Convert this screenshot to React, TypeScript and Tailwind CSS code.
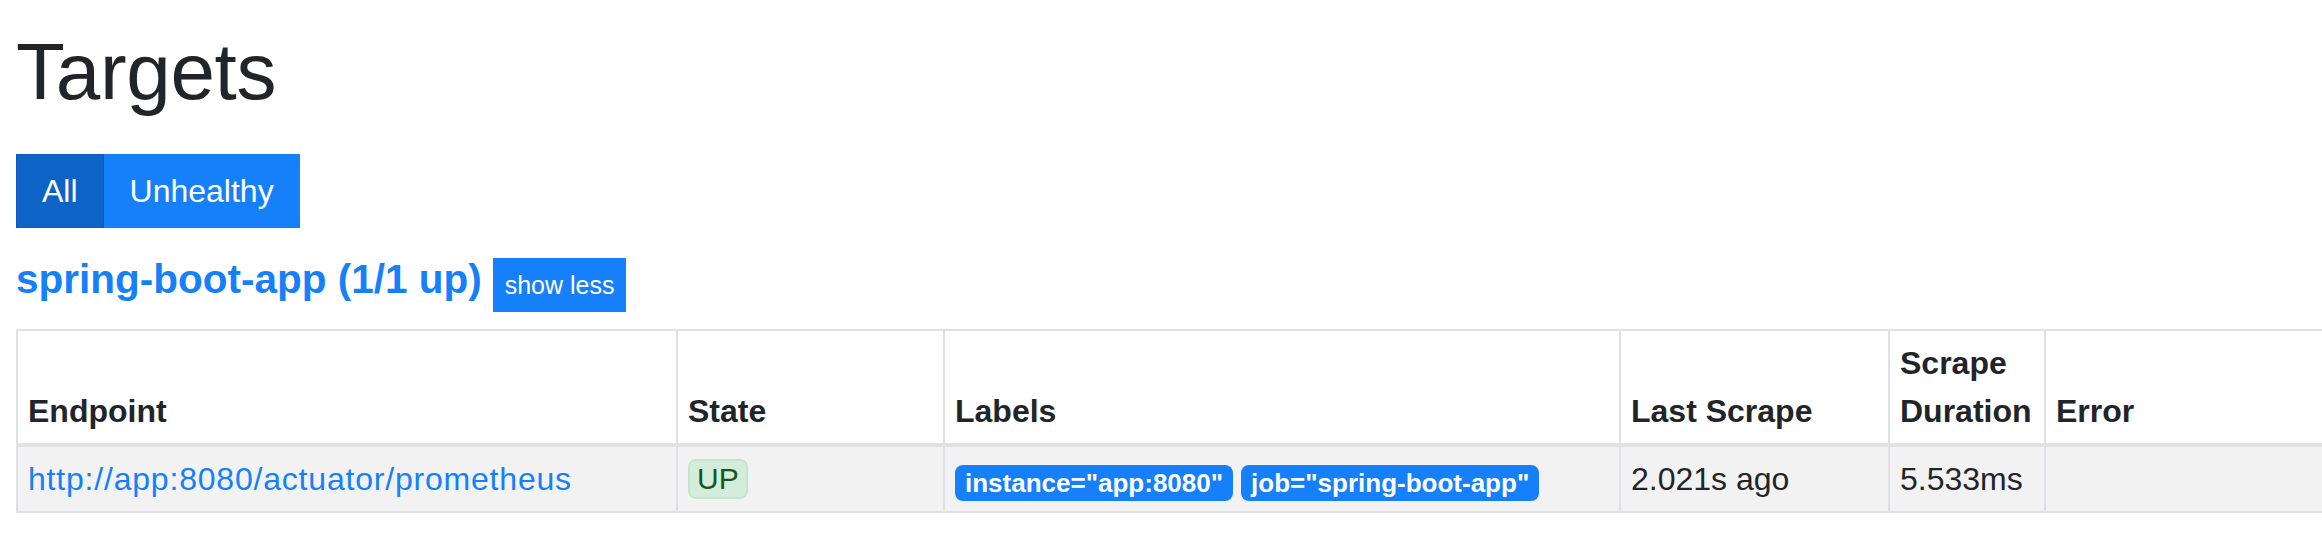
import React from 'react';

const blue = 'bg-[#1580f9]';

const labels = [
  { name: 'instance', value: 'app:8080' },
  { name: 'job', value: 'spring-boot-app' },
];

const App: React.FC = () => {
  return (
    <div className="min-h-screen overflow-hidden bg-white font-['Liberation_Sans',Arial,sans-serif] text-[#212529]">
      <div className="pl-4">
        <h1 className="pt-[24px] text-[80px] font-normal leading-[96px] tracking-[-0.3px]">Targets</h1>

        <div className="mt-[34px] flex">
          <button className="border border-[#0c5bbd] bg-[#0e63c7] px-[25px] py-[12px] text-[32px] leading-[48px] text-white">
            All
          </button>
          <button className={`border border-[#1580f9] ${blue} px-[25px] py-[12px] text-[32px] leading-[48px] text-white`}>
            Unhealthy
          </button>
        </div>

        <div className="mt-[27px] flex items-start gap-[11px]">
          <h2 className="text-[40.5px] font-bold leading-[48px] text-[#1580f9]">spring-boot-app (1/1 up)</h2>
          <button className={`mt-[3px] h-[54px] border border-[#1580f9] ${blue} px-[11px] text-[25px] leading-[36px] text-white`}>
            show less
          </button>
        </div>

        <table className="mt-[17px] w-[2400px] table-fixed border-separate border-spacing-0">
          <thead>
            <tr>
              {[
                { title: 'Endpoint', w: 'w-[660px]' },
                { title: 'State', w: 'w-[267px]' },
                { title: 'Labels', w: 'w-[676px]' },
                { title: 'Last Scrape', w: 'w-[269px]' },
                { title: 'Scrape Duration', w: 'w-[156px]' },
                { title: 'Error', w: 'w-[372px]' },
              ].map((col) => (
                <th
                  key={col.title}
                  className={`${col.w} border-t-2 border-b-4 border-l-2 border-[#dee2e6] px-[10px] py-2 text-left align-bottom text-[32px] font-bold leading-[48px]`}
                >
                  {col.title}
                </th>
              ))}
            </tr>
          </thead>
          <tbody>
            <tr className="bg-[#f2f2f2] text-[32px] leading-[48px]">
              <td className="border-b-2 border-l-2 border-[#dee2e6] px-[10px] py-2 align-middle">
                <a href="#" className="tracking-[0.8px] text-[#1580f9]">
                  http://app:8080/actuator/prometheus
                </a>
              </td>
              <td className="border-b-2 border-l-2 border-[#dee2e6] px-[10px] py-2 align-middle">
                <div className="flex h-[48px] items-center">
                  <span className="inline-flex h-[40px] items-center rounded-[8px] border-2 border-[#c3e6cb] bg-[#d4edda] px-[7px] text-[30px] text-[#155724]">
                    UP
                  </span>
                </div>
              </td>
              <td className="border-b-2 border-l-2 border-[#dee2e6] px-[10px] py-2 align-middle">
                <div className="flex h-[48px] items-end gap-2 pb-[2px]">
                  {labels.map((l) => (
                    <span
                      key={l.name}
                      className={`inline-flex h-[36px] items-center rounded-[8px] ${blue} px-[10px] text-[26px] font-bold leading-[26px] text-white`}
                    >
                      {l.name}="{l.value}"
                    </span>
                  ))}
                </div>
              </td>
              <td className="border-b-2 border-l-2 border-[#dee2e6] px-[10px] py-2 align-middle">2.021s ago</td>
              <td className="border-b-2 border-l-2 border-[#dee2e6] px-[10px] py-2 align-middle">5.533ms</td>
              <td className="border-b-2 border-l-2 border-[#dee2e6] px-[10px] py-2 align-middle"></td>
            </tr>
          </tbody>
        </table>
      </div>
    </div>
  );
};

export default App;
